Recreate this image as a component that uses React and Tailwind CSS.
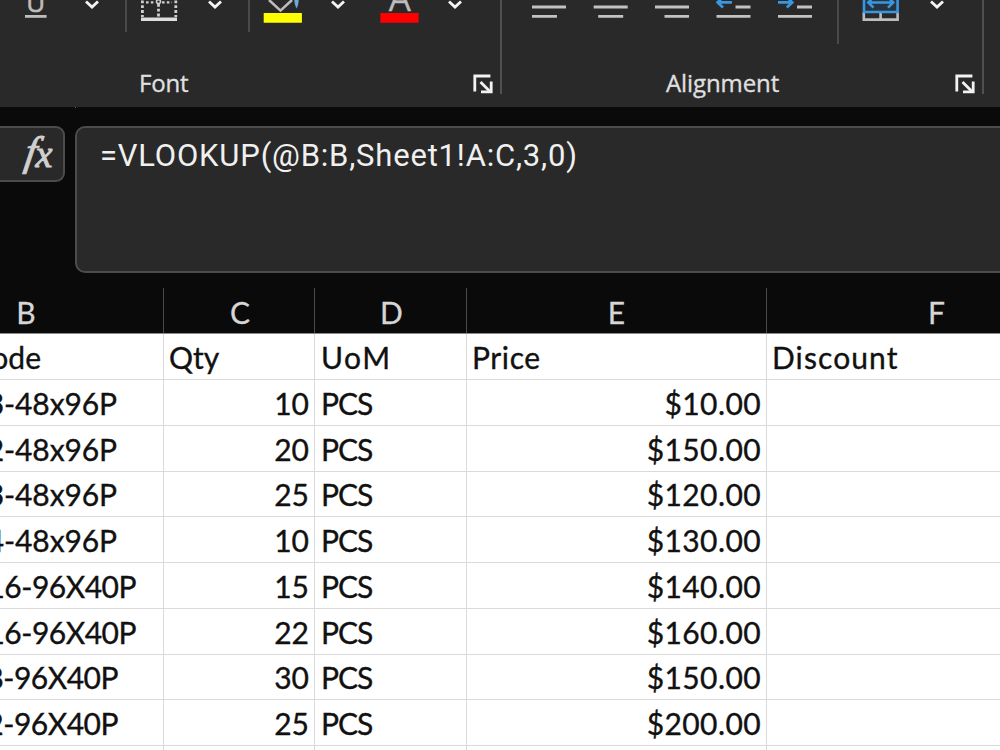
const HEADERS = [
  { letter: 'B', pad: 'pr-[111px]' },
  { letter: 'C', pad: 'pl-0.5' },
  { letter: 'D', pad: 'pl-0.5' },
  { letter: 'E', pad: '' },
  { letter: 'F', pad: 'pl-0.5' },
];

const ROWS = [
  { code: '3-48x96P', qty: 10, uom: 'PCS', price: '$10.00', h: 'h-[46px]', end: 'w-[117px] tracking-[-0.1px]' },
  { code: '2-48x96P', qty: 20, uom: 'PCS', price: '$150.00', h: 'h-[46px]', end: 'w-[117px] tracking-[-0.1px]' },
  { code: '3-48x96P', qty: 25, uom: 'PCS', price: '$120.00', h: 'h-[45px]', end: 'w-[117px] tracking-[-0.1px]' },
  { code: '4-48x96P', qty: 10, uom: 'PCS', price: '$130.00', h: 'h-[46px]', end: 'w-[117px] tracking-[-0.1px]' },
  { code: '16-96X40P', qty: 15, uom: 'PCS', price: '$140.00', h: 'h-[46px]', end: 'w-[136px] tracking-[-0.5px]' },
  { code: '16-96X40P', qty: 22, uom: 'PCS', price: '$160.00', h: 'h-[46px]', end: 'w-[136px] tracking-[-0.5px]' },
  { code: '8-96X40P', qty: 30, uom: 'PCS', price: '$150.00', h: 'h-[45px]', end: 'w-[118px] tracking-[-0.5px]' },
  { code: '2-96X40P', qty: 25, uom: 'PCS', price: '$200.00', h: 'h-[46px]', end: 'w-[118px] tracking-[-0.5px]' },
];

const GRID = 'grid grid-cols-[164px_151px_152px_300px_338px] w-[1105px] shrink-0';
const CELL = 'flex items-center border-r border-b border-[#dadada] whitespace-nowrap';

function Chevron({ className }) {
  return (
    <svg className={`shrink-0 ${className}`} width="14" height="10" viewBox="0 0 14 10" fill="none" stroke="#f4f4f4" strokeWidth="2.8">
      <path d="M1 1.400 7 7l6-5.600" />
    </svg>
  );
}

function Launcher({ className }) {
  return (
    <svg className={`shrink-0 ${className}`} width="20" height="20" viewBox="0 0 20 20" fill="none" stroke="#f2f2f2" strokeWidth="2.8">
      <path d="M1.800 17.600V2h15.600" />
      <path d="M7.500 8l9 9" />
      <path d="M18.200 7.500v10.400H8" />
    </svg>
  );
}

function Lines({ d, className, children }) {
  return (
    <svg className={`shrink-0 ${className}`} width="36" height="20" viewBox="0 0 36 20" fill="none" stroke="#c4c2c1" strokeWidth="2.8">
      <path d={d} />
      {children}
    </svg>
  );
}

function FontGroup() {
  return (
    <section className="w-[502px] h-[94px] shrink-0 border-r-2 border-[#505050] flex flex-col">
      <div className="h-[72px] flex items-start">
        <svg className="ml-6 shrink-0" width="24" height="20" viewBox="24 0 24 20">
          <text x="35.800" y="12.200" textAnchor="middle" fontSize="26" fill="#bdbdbd" stroke="#bdbdbd" strokeWidth=".6" fontFamily="Open Sans, sans-serif">U</text>
          <path d="M25 16.400h21.600" stroke="#bdbdbd" strokeWidth="2.800" />
        </svg>
        <Chevron className="ml-[37px]" />
        <div className="ml-[26px] w-0.5 h-8 bg-[#4a4a4a]" />
        <svg className="ml-[13px] shrink-0" width="38" height="22" viewBox="140 0 38 22" fill="none" stroke="#cfcfcf">
          <path d="M142.400 .5V17M175.800 .5V17M158.500 4V17" strokeWidth="2.800" strokeDasharray="2.800 2" />
          <path d="M146 2.400h9M162 2.400h10" strokeWidth="2.400" strokeDasharray="2.600 2.200" />
          <circle cx="158.500" cy="1.600" r="2" strokeWidth="1.600" />
          <path d="M141 19.200h36" stroke="#dedede" strokeWidth="3.400" />
        </svg>
        <Chevron className="ml-[30px]" />
        <div className="ml-[26px] w-0.5 h-8 bg-[#4a4a4a]" />
        <svg className="ml-[13px] shrink-0" width="40" height="24" viewBox="263 0 40 24">
          <path d="M269 0l11.500 10.600L292 0" fill="none" stroke="#bdbdbd" strokeWidth="2.600" />
          <path d="M294.400 0h4.200c0 3-.6 6-2 8.600-1.400-2.600-2.200-5.600-2.200-8.600z" fill="#6fa9d8" />
          <path d="M263.700 13h38.200v9.700h-38.200z" fill="#ffff00" />
        </svg>
        <Chevron className="ml-7" />
        <svg className="ml-[35px] shrink-0" width="40" height="24" viewBox="380 0 40 24">
          <text x="399.800" y="11.400" textAnchor="middle" fontSize="35" fill="#bdbdbd" stroke="#bdbdbd" strokeWidth=".3" fontFamily="Open Sans, sans-serif">A</text>
          <path d="M380.400 13h38.200v9.700h-38.200z" fill="#ff0000" />
        </svg>
        <Chevron className="ml-7" />
      </div>
      <div className="flex items-start text-[#e0e0e0] text-[24px] leading-[22px] [-webkit-text-stroke:0.3px_#e0e0e0]">
        <span className="ml-[139px] w-[60px] tracking-[-0.2px]">Font</span>
        <Launcher className="ml-[274px] mt-0.5" />
      </div>
    </section>
  );
}

function AlignmentGroup() {
  return (
    <section className="w-[482px] h-[94px] shrink-0 border-r-2 border-[#505050] flex flex-col">
      <div className="h-[72px] flex items-start">
        <Lines className="ml-[29px]" d="M1 7h34M1 16.400h25" />
        <Lines className="ml-[26px]" d="M.7 7h34M5.200 16.400h25" />
        <Lines className="ml-[25px]" d="M1 7h34M10.500 16.400h24.500" />
        <Lines className="ml-[26px]" d="M19.500 7h15M.5 16.400h34">
          <path d="M2 2.400h14M7 -3L1.600 2.400 7 7.600" stroke="#3a96dd" />
        </Lines>
        <Lines className="ml-[25px]" d="M20 7h15M1 16.400h34">
          <path d="M1 2.400h14M9.800 -3l5.400 5.400-5.400 5.200" stroke="#3a96dd" />
        </Lines>
        <div className="ml-[24px] w-0.5 h-11 bg-[#4a4a4a]" />
        <svg className="ml-[23px] shrink-0" width="38" height="22" viewBox="862 0 38 22" fill="none" strokeWidth="2.600">
          <path d="M863.800 12v7.600h33.800V12M880.600 13v6" stroke="#bdbdbd" />
          <path d="M864-2v14h33.600V-2" fill="#263440" stroke="#3a96dd" />
          <path d="M869 2.500h23.500M873.500-3l-5.200 5.500 5.200 5.200M888-3l5.200 5.500-5.200 5.200" stroke="#3a96dd" />
        </svg>
        <Chevron className="ml-[30px]" />
      </div>
      <div className="flex items-start text-[#e0e0e0] text-[24px] leading-[22px] [-webkit-text-stroke:0.3px_#e0e0e0]">
        <span className="ml-[164px] w-[120px] tracking-[-0.1px]">Alignment</span>
        <Launcher className="ml-[169px] mt-0.5" />
      </div>
    </section>
  );
}

function FormulaBar() {
  return (
    <div className="flex flex-col h-[181px]">
      <div className="ml-[75px] w-px h-px bg-[#6a6a6a]" />
      <div className="flex items-start pt-[18px]">
        <div className="w-[65px] h-[56px] shrink-0 border-2 border-l-0 border-[#4c4c4c] rounded-r-[9px] bg-[#292929] overflow-hidden">
          <svg width="63" height="52" viewBox="0 128 63 52" fill="#d0d0d0" stroke="#d0d0d0" strokeWidth="1" fontFamily="Liberation Serif, serif" fontStyle="italic">
            <text transform="translate(23.500 164.500) skewX(-9)" fontSize="41">f</text>
            <text x="35.500" y="166.500" fontSize="38">x</text>
          </svg>
        </div>
        <div className="ml-[10px] h-[147px] flex-1 border-2 border-r-0 border-[#4c4c4c] rounded-l-[10px] bg-[#292929] pl-[23px] pt-[10px]">
          <span className="font-['Roboto',sans-serif] text-[31px] leading-9 tracking-[0.8px] text-[#f0f0f0] whitespace-nowrap">=VLOOKUP(@B:B,Sheet1!A:C,3,0)</span>
        </div>
      </div>
    </div>
  );
}

function Sheet() {
  return (
    <div className="font-['Lato',sans-serif] text-[30px] leading-9 text-[#111]">
      <div className={`${GRID} h-[46px] border-b border-[#8a8a8a] text-[#d6d6d6] [-webkit-text-stroke:0.3px_#d6d6d6]`}>
        {HEADERS.map((h) => (
          <div key={h.letter} className={`flex items-center justify-center border-r border-[#4a4a4a] pt-0.5 ${h.pad}`}>
            {h.letter}
          </div>
        ))}
      </div>
      <div className="[-webkit-text-stroke:0.35px_#111]">
        <div className={`${GRID} h-[46px] bg-white`}>
          <div className={CELL}><span className="w-[41px] flex justify-end">Code</span></div>
          <div className={`${CELL} pl-[5px]`}>Qty</div>
          <div className={`${CELL} pl-[6px] tracking-[1.6px]`}>UoM</div>
          <div className={`${CELL} pl-[5px] tracking-[0.6px]`}>Price</div>
          <div className={`${CELL} pl-[5px] tracking-[1.1px]`}>Discount</div>
        </div>
        {ROWS.map((r, i) => (
          <div key={i} className={`${GRID} ${r.h} bg-white`}>
            <div className={CELL}><span className={`flex justify-end ${r.end}`}>{r.code}</span></div>
            <div className={`${CELL} justify-end pr-[5px]`}>{r.qty}</div>
            <div className={`${CELL} pl-[6px] tracking-[-1px]`}>{r.uom}</div>
            <div className={`${CELL} justify-end pr-[5px] tracking-[0.4px]`}>{r.price}</div>
            <div className={CELL} />
          </div>
        ))}
        <div className={`${GRID} h-[46px] bg-white`}>
          {HEADERS.map((h) => <div key={h.letter} className={CELL} />)}
        </div>
      </div>
    </div>
  );
}

export default function App() {
  return (
    <div className="w-[1000px] h-[750px] overflow-hidden bg-[#0a0a0a] font-['Open_Sans',sans-serif]">
      <div className="h-[107px] flex items-start bg-[#292929] overflow-hidden">
        <FontGroup />
        <AlignmentGroup />
      </div>
      <FormulaBar />
      <Sheet />
    </div>
  );
}
